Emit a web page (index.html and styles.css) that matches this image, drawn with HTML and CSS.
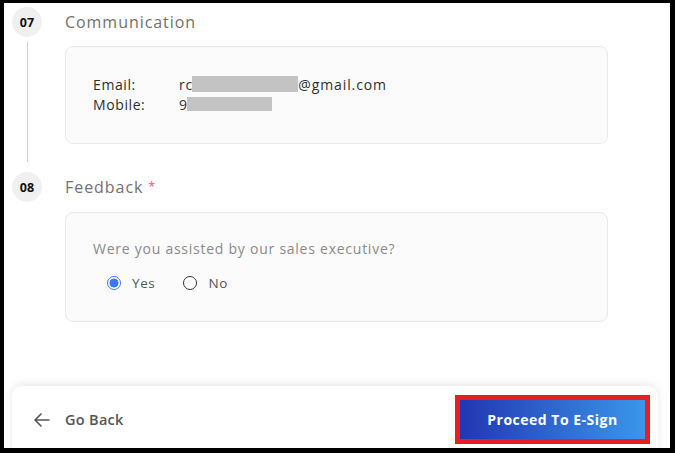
FILE: index.html
```html
<!DOCTYPE html>
<html>
<head>
<meta charset="utf-8">
<link rel="stylesheet" href="styles.css">
</head>
<body>
<div class="frame">
  <div class="steps">
    <div class="step">
      <div class="num">07</div>
      <div class="title">Communication</div>
      <div class="line line-long"></div>
      <div class="card card-comm">
        <div class="row"><span class="lbl">Email:</span><span class="val">rc<span class="mask mask-email"></span>@gmail.com</span></div>
        <div class="row"><span class="lbl">Mobile:</span><span class="val">9<span class="mask mask-mobile"></span></span></div>
      </div>
    </div>
    <div class="step">
      <div class="num">08</div>
      <div class="title">Feedback <span class="req">*</span></div>
      <div class="line"></div>
      <div class="card card-fb">
        <div class="question">Were you assisted by our sales executive?</div>
        <div class="radios">
          <label class="radio"><span class="dot checked"></span><span>Yes</span></label>
          <label class="radio"><span class="dot"></span><span>No</span></label>
        </div>
      </div>
    </div>
  </div>
  <div class="footer">
    <div class="back">
      <svg class="arrow" width="16" height="14" viewBox="0 0 16 14"><path d="M15 7H1.5M7 1L1 7l6 6" fill="none" stroke="#555" stroke-width="1.6" stroke-linecap="round" stroke-linejoin="round"/></svg>
      <span>Go Back</span>
    </div>
    <div class="btn-wrap"><div class="btn">Proceed To E-Sign</div></div>
  </div>
</div>
</body>
</html>
```
FILE: styles.css
```css
* { box-sizing: border-box; }
html, body { margin: 0; padding: 0; background: #000; }
body { font-family: "Open Sans", "Noto Sans", sans-serif; }
.frame {
  margin: 3px 5px 5px 4px;
  width: 666px;
  height: 445px;
  background: #fff;
  overflow: hidden;
  display: flex;
  flex-direction: column;
}
.step {
  display: grid;
  grid-template-columns: 30px 1fr;
  column-gap: 23px;
  padding: 0 62px 0 8px;
}
.step:first-child { padding-top: 4px; }
.num {
  width: 30px; height: 30px; border-radius: 50%;
  background: #f0f0f0;
  display: flex; align-items: center; justify-content: center;
  font-size: 12.5px; font-weight: 700; color: #111;
}
.title {
  height: 30px; display: flex; align-items: center;
  font-size: 16px; color: #707070; letter-spacing: 0.95px;
}
.req { color: #f0506e; font-size: 12px; margin-left: 5px; margin-top: -2px; }
.line {
  grid-column: 1; grid-row: 2;
  justify-self: center;
  width: 1px;
  background: transparent;
}
.line-long { background: #cfcfcf; margin: 5px 0 10px; }
.card {
  grid-column: 2; grid-row: 2;
  background: #fbfbfb;
  border: 1px solid #e8e8e8;
  border-radius: 8px;
}
.card-comm { margin: 9px 0 28px; padding: 27px 27px 29px; height: 98px; }
.row { display: flex; height: 20px; align-items: center; font-size: 14px; color: #2e2e2e; letter-spacing: 0.9px; }
.lbl { width: 86px; letter-spacing: 0.6px; }
.val { display: flex; align-items: center; }
.mask { display: inline-block; background: #c3c3c3; height: 16px; }
.mask-email { width: 106px; margin: 0 0 0 -1px; }
.mask-mobile { width: 85px; height: 14px; margin-left: -1px; }
.card-fb { margin-top: 10px; padding: 26px 27px 28px; height: 110px; }
.question { height: 20px; line-height: 20px; font-size: 14px; color: #8a8a8a; letter-spacing: 0.75px; }
.radios { display: flex; margin-top: 14px; height: 20px; align-items: center; padding-left: 14px; }
.radio { display: flex; align-items: center; font-size: 13.5px; color: #555; margin-right: 28px; letter-spacing: 0.6px; }
.dot {
  width: 14px; height: 14px; border-radius: 50%;
  border: 1.5px solid #333; margin-right: 11px; background: #fff;
}
.dot.checked {
  border: 1.5px solid #3b78f2;
  background: radial-gradient(circle, #3b78f2 0 4.2px, #fff 4.8px);
}
.footer {
  margin: 64px 12px 0 8px;
  height: 80px;
  flex-shrink: 0;
  background: #fff;
  border-radius: 10px;
  box-shadow: 0 -2px 10px rgba(0,0,0,0.09);
  display: flex;
  justify-content: space-between;
  align-items: flex-start;
  padding: 9px 8px 0 22px;
}
.back {
  display: flex; align-items: center; height: 49px;
  font-size: 14.5px; font-weight: 600; color: #555; letter-spacing: 0.3px;
}
.arrow { margin-right: 15px; }
.btn-wrap { border: 5px solid #ea1c24; }
.btn {
  width: 185px; height: 39px;
  background: linear-gradient(90deg, #2236b2, #3a97ea);
  color: #fff; font-weight: 700; font-size: 14px; letter-spacing: 0.5px;
  display: flex; align-items: center; justify-content: center;
}
```
